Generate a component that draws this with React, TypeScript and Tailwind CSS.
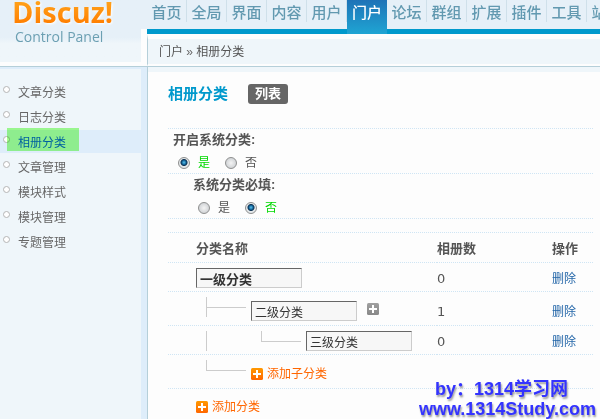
import { useState } from "react";

const NAV = ["首页", "全局", "界面", "内容", "用户", "门户", "论坛", "群组", "扩展", "插件", "工具", "站长"];
const MENU = ["文章分类", "日志分类", "相册分类", "文章管理", "模块样式", "模块管理", "专题管理"];

function PlusIcon({ from, to }: { from: string; to: string }) {
  const id = "plus" + from.slice(1);
  return (
    <svg width="12" height="12" viewBox="0 0 12 12" className="shrink-0" aria-hidden="true">
      <defs>
        <linearGradient id={id} x1="0" y1="0" x2="0" y2="1">
          <stop offset="0" stopColor={from} />
          <stop offset="1" stopColor={to} />
        </linearGradient>
      </defs>
      <rect width="12" height="12" rx="1.5" fill={`url(#${id})`} />
      <path d="M5 2h2v3h3v2H7v3H5V7H2V5h3z" fill="#fff" />
    </svg>
  );
}

// 55px step of the category tree
function Branch({ kind }: { kind: "tee" | "line" | "end" }) {
  return (
    <span className="block h-5 w-[55px] shrink-0 pl-[10px]">
      {kind === "tee" && (
        <span className="block h-full border-l border-[#ccc]">
          <span className="block h-[11px] w-[39px] border-b border-[#ccc]" />
        </span>
      )}
      {kind === "line" && <span className="block h-full border-l border-[#ccc]" />}
      {kind === "end" && <span className="block h-[11px] w-10 border-b border-l border-[#ccc]" />}
    </span>
  );
}

function NameInput({ value, bold }: { value: string; bold?: boolean }) {
  return (
    <input
      type="text"
      aria-label="分类名称"
      defaultValue={value}
      className={
        "h-5 w-[106px] border border-t-[#666] border-r-[#ccc] border-b-[#ccc] border-l-[#666] bg-[#f7f7f7] px-[3px] text-[#333] outline-none " +
        (bold ? "text-[13px] font-bold" : "text-xs")
      }
    />
  );
}

function YesNo({ title, name, initial, indent }: { title: string; name: string; initial: string; indent?: boolean }) {
  const [value, setValue] = useState(initial);
  return (
    <fieldset className={"border-b border-dotted border-[#cfe5f4] " + (indent ? "pl-[25px]" : "pl-[5px]")}>
      <legend className="float-left h-[22px] w-full text-[13px] leading-[22px] font-bold">{title}</legend>
      <div className="clear-both flex h-[22px] items-center gap-[15px] pt-0.5 pl-[5px]">
        {["是", "否"].map((opt) => (
          <label key={opt} className={"flex items-center gap-2 " + (value === opt ? "text-[#00d800]" : "")}>
            <input
              type="radio"
              name={name}
              checked={value === opt}
              onChange={() => setValue(opt)}
              className="size-3 appearance-none rounded-full border border-[#8e8f8f] bg-radial from-[#f4f4f4] to-[#c4c8cc] checked:bg-[radial-gradient(circle_at_50%_45%,#5cc4ee_0,#14679c_2px,#0a2f50_3px,#e4e8ea_4px)]"
            />
            {opt}
          </label>
        ))}
      </div>
    </fieldset>
  );
}

const cell = "border-b border-dotted border-[#cfe5f4] pt-[5px] align-top";

function Row({ count, low, children }: { count: string; low?: boolean; children: React.ReactNode }) {
  const shift = low ? "mt-1 " : "";
  return (
    <tr className={low ? "h-[34px]" : "h-[29px]"}>
      <td className={cell + " pl-7"}>
        <div className="flex items-start">{children}</div>
      </td>
      <td className={cell}>
        <div className={shift + "font-['DejaVu_Sans',sans-serif] text-[13px] leading-[22px]"}>{count}</div>
      </td>
      <td className={cell}>
        <div className={shift + "leading-[22px]"}>
          <a href="#" className="text-[#2366a8]">删除</a>
        </div>
      </td>
    </tr>
  );
}

export default function App() {
  return (
    <div className="relative flex min-h-screen flex-col overflow-hidden bg-[#fdfdfd] font-['Liberation_Sans','Noto_Sans_CJK_SC',sans-serif] text-xs text-[#555]">
      <header className="flex h-[67px] border-b border-[#b5cfd9] bg-[#e6f0f8]">
        <div className="w-[141px] shrink-0 border-b-4 border-[#fdfdfd] bg-linear-to-b from-[#e6f0f8] from-60% to-[#eff6fa] to-70% pl-3 font-['Open_Sans','Noto_Sans',sans-serif]">
          <div className="drop-shadow-[1px_1px_1px_#fff]">
            <span className="block bg-linear-to-b from-[#ffa31a] to-[#ff7e00] bg-clip-text text-[29px] leading-6 font-bold text-transparent">
              Discuz!
            </span>
          </div>
          <div className="pl-[3px] text-sm leading-[26px] text-[#6b9fb2]">Control Panel</div>
        </div>
        <div className="mt-[29px] w-[6px] shrink-0 bg-[#fdfdfd]" />
        <div className="min-w-0 flex-1">
          <nav className="flex h-[34px] overflow-hidden shadow-[inset_0_-5px_#0099cc]">
            {NAV.map((item) => (
              <a
                key={item}
                href="#"
                className={
                  "w-10 shrink-0 text-center text-[15px] leading-[26px] font-medium " +
                  (item === "门户"
                    ? "h-[34px] bg-linear-to-b from-[#1f73b7] to-[#1fa5d3] text-white"
                    : "h-[22px] border-r border-[#cfe0ea] text-[#6299b0]")
                }
              >
                {item}
              </a>
            ))}
          </nav>
          <div className="h-8 border-t-[5px] border-b-2 border-l border-[#fdfdfd] border-l-[#b5cfd9] bg-[#eff6fa] pl-[11px] leading-[26px]">
            门户 <span className="text-[#666]">»</span> 相册分类
          </div>
        </div>
      </header>

      <div className="flex flex-1">
        <aside className="w-[147px] shrink-0 border-t-2 border-r-[6px] border-[#deedfa] bg-[#eff6fa]">
          <ul className="flex flex-col gap-0.5 pt-[11px]">
            {MENU.map((item) => {
              const active = item === "相册分类";
              return (
                <li key={item} className={"relative flex h-[23px] items-center pl-[3px] " + (active ? "bg-[#deedfa]" : "")}>
                  <span className="mb-1 size-[7px] rounded-full border border-[#b5b5b5] bg-white" />
                  {active && <span className="absolute -top-0.5 left-[7px] h-[23px] w-[72px] bg-[#a3ff91] mix-blend-multiply" />}
                  <a href="#" className={"relative pt-0.5 pl-2 " + (active ? "text-[#0060a0]" : "text-[#666]")}>{item}</a>
                </li>
              );
            })}
          </ul>
        </aside>

        <main className="min-w-0 flex-1 border-l border-[#b5cfd9]">
          <div className="h-[5px] bg-[#eff6fa]" />
          <div className="pr-[7px] pl-5">
            <div className="flex h-[56px] items-center gap-5 pb-4 pt-1">
              <h1 className="text-[15px] font-bold text-[#0099cc]">相册分类</h1>
              <button type="button" className="h-5 w-10 rounded-[3px] bg-[#666] text-[13px] leading-5 font-bold text-white">
                列表
              </button>
            </div>

            <form className="border-t border-dotted border-[#cfe5f4]">
              <YesNo title="开启系统分类:" name="open" initial="是" />
              <YesNo title="系统分类必填:" name="required" initial="否" indent />
            </form>

            <table className="mt-[13px] w-full table-fixed border-separate border-spacing-0 border-t border-dotted border-[#cfe5f4]">
              <thead>
                <tr className="h-[30px] text-left text-[13px]">
                  <th className="border-b border-dotted border-[#cfe5f4] pt-0.5 pl-7">分类名称</th>
                  <th className="w-[115px] border-b border-dotted border-[#cfe5f4] pt-0.5">相册数</th>
                  <th className="w-[41px] border-b border-dotted border-[#cfe5f4] pt-0.5">操作</th>
                </tr>
              </thead>
              <tbody>
                <Row count="0">
                  <NameInput value="一级分类" bold />
                </Row>
                <Row count="1" low>
                  <Branch kind="tee" />
                  <span className="mt-1 flex items-center gap-[10px]">
                    <NameInput value="二级分类" />
                    <button type="button" aria-label="添加" className="pb-1">
                      <PlusIcon from="#a0a0a0" to="#888888" />
                    </button>
                  </span>
                </Row>
                <Row count="0">
                  <Branch kind="line" />
                  <Branch kind="end" />
                  <NameInput value="三级分类" />
                </Row>
                <tr className="h-[34px]">
                  <td colSpan={3} className={cell + " pl-7"}>
                    <div className="flex items-start">
                      <Branch kind="end" />
                      <a href="#" className="mt-1 flex h-5 items-center gap-1 text-[#ff6600]">
                        <PlusIcon from="#ff9900" to="#ff6600" />
                        添加子分类
                      </a>
                    </div>
                  </td>
                </tr>
                <tr>
                  <td colSpan={3} className="pt-2 pl-7">
                    <a href="#" className="flex h-5 items-center gap-1 text-[#ff6600]">
                      <PlusIcon from="#ff9900" to="#ff6600" />
                      添加分类
                    </a>
                  </td>
                </tr>
              </tbody>
            </table>
          </div>
        </main>
      </div>

      <div className="absolute right-1 bottom-0 text-lg leading-5 font-bold text-[#3333ff] [text-shadow:1px_2px_2px_#999]">
        <div className="pl-4">by：1314学习网</div>
        <div>www.1314Study.com</div>
      </div>
    </div>
  );
}
